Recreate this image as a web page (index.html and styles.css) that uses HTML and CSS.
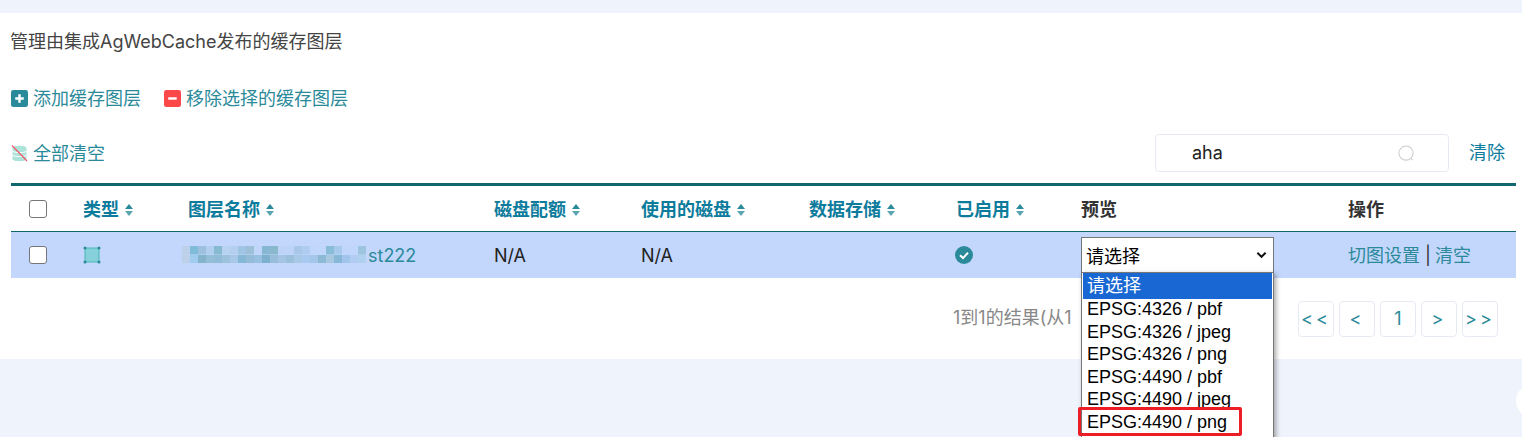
FILE: index.html
```html
<!DOCTYPE html>
<html lang="zh">
<head>
<meta charset="utf-8">
<title>缓存图层</title>
<link rel="stylesheet" href="styles.css">
</head>
<body>
<main class="card">
  <p class="intro">管理由集成AgWebCache发布的缓存图层</p>
  <div class="actions">
    <a class="action"><svg class="ico" viewBox="0 0 18 18"><rect width="18" height="18" rx="2.5" fill="#2b8a9a"/><path d="M9 4.500v9M4.500 9h9" stroke="#fff" stroke-width="2.600"/></svg>添加缓存图层</a>
    <a class="action"><svg class="ico" viewBox="0 0 18 18"><rect width="18" height="18" rx="2.5" fill="#fb4848"/><path d="M4.500 9h9" stroke="#fff" stroke-width="2.600"/></svg>移除选择的缓存图层</a>
  </div>
  <div class="toolbar">
    <a class="action"><svg class="ico" viewBox="0 0 16 17"><path d="M1 3c0-3 14-3 14 0v11c0 3-14 3-14 0z" fill="#aee3d9"/><path d="M1 6.500c3 1.500 11 1.500 14 0M1 10.500c3 1.500 11 1.500 14 0" stroke="#fff" fill="none"/><path d="M0.500 0.500L15.500 16" stroke="#f0586a" stroke-width="1.200"/></svg>全部清空</a>
    <div class="search-group">
      <div class="search"><span>aha</span><svg class="search-ico" viewBox="0 0 18 18"><circle cx="8.500" cy="8.500" r="7.500" fill="none" stroke="#ccc" stroke-width="1.100"/><path d="M13.500 14l2 2" stroke="#ccc" stroke-width="1.100"/></svg></div>
      <a class="clear">清除</a>
    </div>
  </div>
  <table class="grid">
    <colgroup><col class="c1"><col class="c2"><col class="c3"><col class="c4"><col class="c5"><col class="c6"><col class="c7"><col class="c8"><col class="c9"></colgroup>
    <thead>
      <tr>
        <th class="check"><span class="box"></span></th>
        <th>类型<i class="sort"></i></th>
        <th>图层名称<i class="sort"></i></th>
        <th>磁盘配额<i class="sort"></i></th>
        <th>使用的磁盘<i class="sort"></i></th>
        <th>数据存储<i class="sort"></i></th>
        <th>已启用<i class="sort"></i></th>
        <th class="plain">预览</th>
        <th class="plain">操作</th>
      </tr>
    </thead>
    <tbody>
      <tr>
        <td class="check"><span class="box"></span></td>
        <td><svg class="poly" viewBox="0 0 18 18"><rect x="2" y="2" width="14" height="14" fill="#86d0dc" stroke="#49b8b0"/><g fill="#2b8a9a"><circle cx="2" cy="2" r="1.500"/><circle cx="16" cy="2" r="1.500"/><circle cx="2" cy="16" r="1.500"/><circle cx="16" cy="16" r="1.500"/></g></svg></td>
        <td><div class="name"><span class="mosaic"></span><a>st222</a></div></td>
        <td class="txt">N/A</td>
        <td class="txt">N/A</td>
        <td></td>
        <td><svg class="ok" viewBox="0 0 18 18"><circle cx="9" cy="9" r="9" fill="#2b8a9a"/><path d="M5 9.300l3 2.800 5-5.400" fill="none" stroke="#fff" stroke-width="2"/></svg></td>
        <td><div class="select"><span>请选择</span><svg class="chev" viewBox="0 0 12 8"><path d="M1.500 1.500L6 6l4.500-4.500" fill="none" stroke="#111" stroke-width="2.200"/></svg></div></td>
        <td class="ops txt"><a>切图设置</a><b>|</b><a>清空</a></td>
      </tr>
    </tbody>
  </table>
  <div class="footer">
    <span class="summary">1到1的结果(从1 条结果中)</span>
    <nav class="pager"><a>&lt;&lt;</a><a>&lt;</a><a class="num">1</a><a>&gt;</a><a>&gt;&gt;</a></nav>
  </div>
</main>
<ul class="options">
  <li class="selected">请选择</li>
  <li>EPSG:4326 / pbf</li>
  <li>EPSG:4326 / jpeg</li>
  <li>EPSG:4326 / png</li>
  <li>EPSG:4490 / pbf</li>
  <li>EPSG:4490 / jpeg</li>
  <li>EPSG:4490 / png</li>
</ul>
<div class="mark"></div>
<div class="fab"></div>
</body>
</html>
```
FILE: styles.css
```css
* { box-sizing: border-box; }
html, body { height: 100%; }
body {
  margin: 0;
  background: #eff3fb;
  overflow: hidden;
  font: 18px/24px Inter, "Noto Sans CJK SC", sans-serif;
  color: #333;
}
.card {
  margin-top: 13px;
  height: 346px;
  background: #fff;
  padding: 17px 6px 0 10px;
}
.intro { margin: 0; height: 24px; color: #444; }
.actions { display: flex; gap: 23px; margin: 32px 0 0 1px; height: 24px; }
.action { display: flex; align-items: center; color: #2b8a9a; padding-top: 2px; }
.ico { width: 17px; height: 17px; margin: -2px 5px 0 0; }
.toolbar { display: flex; justify-content: space-between; align-items: center; margin: 24px 0 0 1px; height: 38px; }
.search-group { display: flex; align-items: center; gap: 20px; padding-right: 11px; }
.search {
  width: 294px; height: 38px;
  border: 1px solid #e6ebf3; border-radius: 4px;
  display: flex; align-items: center; justify-content: space-between;
  padding: 0 33px 0 36px;
  color: #222;
}
.search-ico { width: 17px; height: 17px; }
.clear { color: #0d7c9c; }
.grid {
  width: 1505px; margin: 11px 0 0 1px;
  table-layout: fixed; border-collapse: separate; border-spacing: 0;
  border-top: 3px solid #0f6670;
}
.c1 { width: 72px; } .c2 { width: 105px; } .c3 { width: 306px; } .c4 { width: 147px; }
.c5 { width: 168px; } .c6 { width: 147px; } .c7 { width: 125px; } .c8 { width: 267px; } .c9 { width: 168px; }
th, td { padding: 0; text-align: left; vertical-align: middle; }
th { height: 46px; padding-top: 2px; color: #0d7c9c; font-weight: 700; border-bottom: 1px solid #0f6670; }
th.check { padding: 0 0 0 18px; }
th.plain { color: #333; }
td { height: 45.500px; background: #c3d7fd; color: #222; }
td.txt { padding-top: 2px; }
.check { padding-left: 18px; }
.box { display: block; width: 18px; height: 18px; background: #fff; border: 1px solid #767676; border-radius: 3px; }
.sort { display: inline-block; position: relative; width: 8px; height: 12px; margin-left: 6px; vertical-align: 0; }
.sort::before, .sort::after { content: ""; position: absolute; left: 0; border-style: solid; border-color: transparent; border-width: 0 4px; }
.sort::before { top: 0; border-bottom: 5.500px solid #2b8a9a; }
.sort::after { bottom: 0; border-top: 5.500px solid #5aa6b0; }
.poly { display: block; width: 18px; height: 18px; }
.name { display: flex; align-items: center; padding-top: 2px; }
.name a { color: #2b8a9a; margin-left: 2px; }
.mosaic {
  width: 184px; height: 17px; margin: -2px 0 0 -6px;
  background:
    linear-gradient(90deg, #bcd0ea 0 8px, #80bbda 8px 16px, #9cc0de 16px 24px, #b0cff0 24px 32px, #86bad0 32px 40px, #b8d2f2 40px 48px, #b5cff0 48px 56px, #a0c4e4 56px 64px, #9dc0d8 64px 72px, #c0d6f8 72px 80px, #86b8d4 80px 88px, #8ab8cc 88px 96px, #bdd4f8 96px 112px, #a8c8e8 112px 120px, #b0cdf0 120px 128px, #c0d6fa 128px 144px, #88bcd8 144px 152px, #a8caea 152px 160px, #c0d6fa 160px 176px, #9cc4dc 176px 184px) 0 0 / 100% 50% no-repeat,
    linear-gradient(90deg, #bcd0ea 0 8px, #a0ccf0 8px 16px, #84b4cc 16px 24px, #94bdd8 24px 32px, #90bcd8 32px 40px, #9cc2dc 40px 48px, #a8c8e8 48px 56px, #84b8d4 56px 64px, #94bcd8 64px 72px, #98c0e0 72px 80px, #7cb0cc 80px 88px, #98bedc 88px 96px, #a4c6e4 96px 104px, #9ac0dc 104px 112px, #a8c8e8 112px 120px, #a8caf0 120px 128px, #a4c6e8 128px 136px, #8cbad4 136px 144px, #a8c8e0 144px 152px, #88b8d8 152px 160px, #a0c4ec 160px 168px, #b0ccf0 168px 176px, #b0d0f0 176px 184px) 0 100% / 100% 50% no-repeat;
  filter: blur(.4px);
}
.ok { display: block; width: 18px; height: 18px; margin-left: -1px; }
.select {
  width: 193px; height: 36px;
  display: flex; align-items: center; justify-content: space-between;
  padding: 0 6px 0 4px;
  background: #fff; border: 1px solid #767676;
  font: 18px "Liberation Sans", "Noto Sans CJK SC", sans-serif; color: #000;
}
.chev { width: 11px; height: 8px; }
.ops a { color: #2b8a9a; }
.ops b { font-weight: 400; color: #333; margin: 0 4px 0 5px; }
.footer { display: flex; justify-content: flex-end; align-items: center; height: 81px; padding: 2px 18px 0 0; }
.summary { color: #888; width: 124px; margin: -2px 221px 0 0; white-space: nowrap; overflow: hidden; }
.pager { display: flex; gap: 5px; }
.pager a {
  width: 36px; height: 36px;
  display: flex; align-items: center; justify-content: center;
  border: 1px solid #e6ebf3; border-radius: 4px;
  color: #2b8a9a; letter-spacing: 3px;
}
.pager .num { letter-spacing: 0; }
.options {
  position: absolute; left: 1081px; top: 272px; width: 193px; height: 180px;
  margin: 0; padding: 0 1px; list-style: none;
  background: #fff; border: 1px solid #767676;
  box-shadow: 2px 2px 5px rgba(0,0,0,.35);
  font: 18px/21px "Liberation Sans", "Noto Sans CJK SC", sans-serif; color: #000;
}
.options li { padding-left: 4px; height: 22.500px; white-space: nowrap; }
.options .selected { background: #1967d2; color: #fff; height: 26px; line-height: 27px; }
.mark {
  position: absolute; left: 1078px; top: 407px; width: 164px; height: 29px;
  border: 3.500px solid #ee1c25; border-radius: 2px;
}
.fab {
  position: absolute; left: 1516px; top: 384px; width: 34px; height: 34px;
  border-radius: 50%; background: #fff;
}
```
